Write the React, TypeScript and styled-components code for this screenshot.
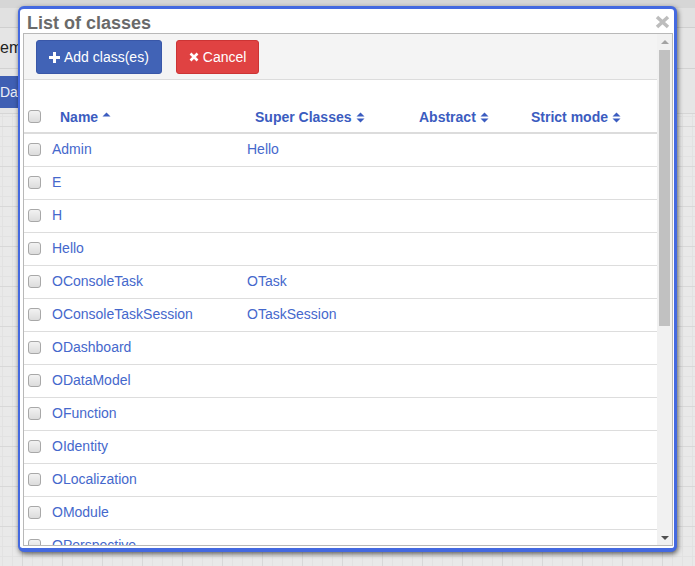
import React from "react";
import styled, { createGlobalStyle } from "styled-components";

const GlobalStyle = createGlobalStyle`
  html, body {
    margin: 0;
    padding: 0;
  }
  body {
    font-family: "Liberation Sans", Arial, sans-serif;
  }
  * {
    box-sizing: border-box;
  }
`;

const Page = styled.div`
  position: relative;
  width: 695px;
  height: 566px;
  overflow: hidden;
  display: flex;
  flex-direction: column;
  background-color: #e8e8e8;
`;

const TopStrip = styled.div`
  height: 8px;
  background: #d6d6d6;
`;

const SubStrip = styled.div`
  height: 20px;
  background: #e1e1e1;
  border-bottom: 1px solid #cfcfcf;
`;

const MenuRow = styled.div`
  height: 41px;
  display: flex;
  align-items: center;
  background: #e5e5e5;
  border-bottom: 1px solid #d2d2d2;
  font-size: 16px;
  color: #222;
`;

const ButtonRow = styled.div`
  height: 45px;
  padding-top: 7px;
  background: #e6e6e6;
  border-bottom: 1px solid #d6d6d6;
`;

const BgButton = styled.div`
  display: inline-flex;
  align-items: center;
  height: 32px;
  margin-left: -14px;
  padding: 0 14px;
  background: #3f5fb3;
  color: #eef0f8;
  font-size: 14px;
  border-radius: 3px;
`;

const Grid = styled.div`
  flex: 1;
  background-color: #e9e9e9;
  background-image: linear-gradient(to right, #d8d8d8 1px, transparent 1px),
    linear-gradient(to bottom, #d8d8d8 1px, transparent 1px),
    linear-gradient(to right, #e2e2e2 1px, transparent 1px),
    linear-gradient(to bottom, #e2e2e2 1px, transparent 1px);
  background-size: 40px 40px, 40px 40px, 10px 10px, 10px 10px;
  background-position: 22px 0, 0 12px, 2px 0, 0 2px;
`;

const Dialog = styled.div`
  position: absolute;
  left: 18px;
  top: 6px;
  width: 659px;
  height: 546px;
  display: flex;
  flex-direction: column;
  background: #fff;
  border: 3px solid #4469e0;
  border-left-width: 2px;
  border-bottom-width: 4px;
  border-radius: 6px;
  padding: 0 1px 2px 3px;
  box-shadow: 1px 2px 5px rgba(0, 0, 0, 0.6);
`;

const TitleBar = styled.div`
  height: 24px;
  display: flex;
  align-items: flex-start;
  justify-content: space-between;
  padding: 0 3px 0 4px;
`;

const Title = styled.div`
  margin-top: 4px;
  line-height: 20px;
  font-size: 18px;
  font-weight: bold;
  color: #6a6a6a;
`;

const CloseIcon = styled.svg`
  margin-top: 6px;
  width: 15px;
  height: 14px;
`;

const Panel = styled.div`
  flex: 1;
  min-height: 0;
  display: flex;
  border: 1px solid #b8b8b8;
  overflow: hidden;
`;

const ScrollArea = styled.div`
  flex: 1;
  min-width: 0;
  overflow: hidden;
`;

const Toolbar = styled.div`
  display: flex;
  gap: 14px;
  padding: 6px 12px 5px;
  background: #f4f4f4;
  border-bottom: 1px solid #dcdcdc;
`;

const Button = styled.button<{ $tone: "primary" | "danger" }>`
  height: 34px;
  display: inline-flex;
  align-items: center;
  gap: 4px;
  padding: 0 12px;
  border-radius: 3px;
  border: 1px solid ${(p) => (p.$tone === "primary" ? "#3957a8" : "#cc3434")};
  background: ${(p) => (p.$tone === "primary" ? "#4163b6" : "#e04242")};
  color: #fff;
  font-family: "Liberation Sans", Arial, sans-serif;
  font-size: 14px;
  cursor: pointer;
`;

const Table = styled.table`
  width: 633px;
  border-collapse: collapse;
  table-layout: fixed;
`;

const HeadCell = styled.th<{ $check?: boolean }>`
  padding: ${(p) => (p.$check ? "27px 0 5px 4px" : "27px 8px 5px 16px")};
  line-height: 20px;
  font-size: 14px;
  font-weight: bold;
  color: #3b5cc0;
  text-align: left;
  white-space: nowrap;
  vertical-align: middle;
  border-bottom: 2px solid #dcdcdc;
`;

const Cell = styled.td<{ $check?: boolean }>`
  padding: ${(p) => (p.$check ? "5px 0 7px 4px" : "5px 8px 7px")};
  line-height: 20px;
  font-size: 14px;
  color: #4568cc;
  white-space: nowrap;
  overflow: hidden;
  vertical-align: middle;
  border-bottom: 1px solid #dddddd;
`;

const Check = styled.span<{ $raise?: boolean }>`
  display: inline-block;
  width: 13px;
  height: 13px;
  vertical-align: middle;
  position: relative;
  top: ${(p) => (p.$raise ? "-2px" : "-1px")};
  border: 1px solid #a8a8a8;
  border-radius: 3px;
  background: linear-gradient(#f2f2f2, #dcdcdc);
`;

const SortIcon = styled.svg`
  width: 9px;
  height: 11px;
  margin-left: 4px;
  vertical-align: -1px;
`;

const Scrollbar = styled.div`
  width: 15px;
  display: flex;
  flex-direction: column;
  background: #f1f1f1;
`;

const Arrow = styled.div<{ $down?: boolean }>`
  height: 15px;
  display: flex;
  align-items: center;
  justify-content: center;
  margin-top: ${(p) => (p.$down ? "auto" : "0")};
  &::after {
    content: "";
    width: 0;
    height: 0;
    border-left: 4px solid transparent;
    border-right: 4px solid transparent;
    ${(p) =>
      p.$down
        ? "border-top: 4px solid #505050;"
        : "border-bottom: 4px solid #a3a3a3;"}
  }
`;

const Thumb = styled.div`
  height: 276px;
  margin: 1px 2px 0 2px;
  background: #c1c1c1;
`;

type Row = { name: string; superClass?: string };

const rows: Row[] = [
  { name: "Admin", superClass: "Hello" },
  { name: "E" },
  { name: "H" },
  { name: "Hello" },
  { name: "OConsoleTask", superClass: "OTask" },
  { name: "OConsoleTaskSession", superClass: "OTaskSession" },
  { name: "ODashboard" },
  { name: "ODataModel" },
  { name: "OFunction" },
  { name: "OIdentity" },
  { name: "OLocalization" },
  { name: "OModule" },
  { name: "OPerspective" },
];

function Sort({ asc }: { asc?: boolean }) {
  return (
    <SortIcon viewBox="0 0 9 11">
      <path d="M0.5 4.5 L4.5 0.5 L8.5 4.5 Z" fill="#3b5cc0" />
      {!asc && <path d="M0.5 6.5 L4.5 10.5 L8.5 6.5 Z" fill="#3b5cc0" />}
    </SortIcon>
  );
}

function PlusIcon() {
  return (
    <svg width="11" height="11" viewBox="0 0 11 11">
      <path d="M4 0 H7 V4 H11 V7 H7 V11 H4 V7 H0 V4 H4 Z" fill="#fff" />
    </svg>
  );
}

function TimesIcon() {
  return (
    <svg width="10" height="10" viewBox="0 0 10 10">
      <path d="M1.5 1.5 L8.5 8.5 M8.5 1.5 L1.5 8.5" stroke="#fff" strokeWidth="2.6" />
    </svg>
  );
}

export default function App() {
  return (
    <>
      <GlobalStyle />
      <Page>
        <TopStrip />
        <SubStrip />
        <MenuRow>em</MenuRow>
        <ButtonRow>
          <BgButton>Data</BgButton>
        </ButtonRow>
        <Grid />

        <Dialog>
          <TitleBar>
            <Title>List of classes</Title>
            <CloseIcon viewBox="0 0 15 14">
              <path d="M2 2 L13 12 M13 2 L2 12" stroke="#bdbdbd" strokeWidth="3.6" />
            </CloseIcon>
          </TitleBar>
          <Panel>
            <ScrollArea>
              <Toolbar>
                <Button $tone="primary">
                  <PlusIcon />
                  Add class(es)
                </Button>
                <Button $tone="danger">
                  <TimesIcon />
                  Cancel
                </Button>
              </Toolbar>
              <Table>
                <colgroup>
                  <col style={{ width: 20 }} />
                  <col style={{ width: 195 }} />
                  <col style={{ width: 164 }} />
                  <col style={{ width: 112 }} />
                  <col style={{ width: 142 }} />
                </colgroup>
                <thead>
                  <tr>
                    <HeadCell $check>
                      <Check $raise />
                    </HeadCell>
                    <HeadCell>
                      Name
                      <Sort asc />
                    </HeadCell>
                    <HeadCell>
                      Super Classes
                      <Sort />
                    </HeadCell>
                    <HeadCell>
                      Abstract
                      <Sort />
                    </HeadCell>
                    <HeadCell>
                      Strict mode
                      <Sort />
                    </HeadCell>
                  </tr>
                </thead>
                <tbody>
                  {rows.map((r) => (
                    <tr key={r.name}>
                      <Cell $check>
                        <Check />
                      </Cell>
                      <Cell>{r.name}</Cell>
                      <Cell>{r.superClass ?? ""}</Cell>
                      <Cell />
                      <Cell />
                    </tr>
                  ))}
                </tbody>
              </Table>
            </ScrollArea>
            <Scrollbar>
              <Arrow />
              <Thumb />
              <Arrow $down />
            </Scrollbar>
          </Panel>
        </Dialog>
      </Page>
    </>
  );
}
